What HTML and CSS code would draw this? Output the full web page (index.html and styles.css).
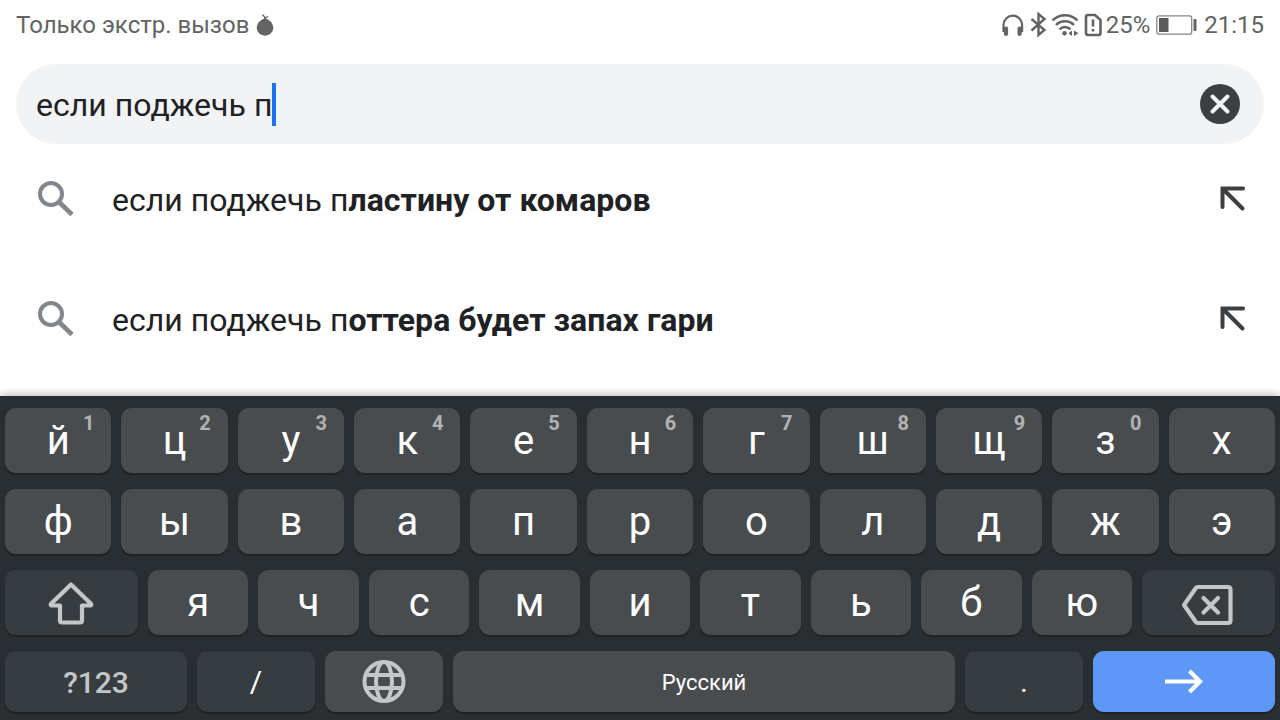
FILE: index.html
```html
<!DOCTYPE html>
<html lang="ru">
<head>
    <meta charset="UTF-8">
    <meta name="viewport" content="width=device-width, initial-scale=1.0">
    <title>Поиск</title>
    <link rel="stylesheet" href="styles.css">
</head>
<body>
    <header class="status">
        <span class="carrier">Только экстр. вызов</span>
        <svg class="fruit" width="18" height="24" viewBox="0 0 18 24">
            <circle cx="9" cy="14.500" r="8.300" fill="#636363"/>
            <path d="M9 8V4.500L6.500 1.500M9 5l3-1.500" fill="none" stroke="#636363" stroke-width="1.300"/>
            <path d="M5 8l4-3.500L13 8z" fill="#636363"/>
        </svg>
        <div class="status-icons">
            <svg width="104" height="26" viewBox="0 0 104 26" fill="none" stroke="#636363" stroke-width="2.200">
                <!-- headphones -->
                <path d="M2.500 20v-7a9.300 9.300 0 0 1 18.600 0v7"/>
                <path d="M5 16.500v5.500M18.600 16.500v5.500" stroke-width="4.200" stroke-linecap="round"/>
                <!-- bluetooth -->
                <path d="M30.500 7l13 11-6 5V2l6 5-13 11.500" stroke-width="2.400"/>
                <!-- wifi -->
                <path d="M51.500 8.500a17.500 17.500 0 0 1 25 0M55 13a12.500 12.500 0 0 1 18 0M58.500 17.300a8 8 0 0 1 11 0" stroke-width="2.500"/>
                <circle cx="63.500" cy="21.300" r="2.200" fill="#636363" stroke="none"/>
                <path d="M71 18.500v5.500l-3.500-2.800zM73 18.500l4.500 2.700-4.500 2.800z" fill="#636363" stroke="none"/>
                <!-- sim card -->
                <path d="M85 5q0-2 2-2h7l5.500 5V21q0 2-2 2H87q-2 0-2-2z" stroke-width="2.600"/>
                <path d="M92 7.500v7M92 17v2.600" stroke-width="2.600"/>
            </svg>
            <span class="percent">25%</span>
            <svg class="battery" width="41" height="20" viewBox="0 0 41 20">
                <rect x=".8" y=".8" width="34.900" height="18.400" rx="2.500" fill="none" stroke="#858585" stroke-width="1.300"/>
                <rect x="3" y="3" width="9.500" height="14" fill="#5c5c5c"/>
                <rect x="37.500" y="4" width="3" height="12" rx="1" fill="#636363"/>
            </svg>
            <span class="time">21:15</span>
        </div>
    </header>

    <div class="search">
        <span class="query">если поджечь п</span>
        <span class="caret"></span>
        <svg class="clear" width="40" height="40" viewBox="0 0 40 40">
            <circle cx="20" cy="20" r="20" fill="#3c4043"/>
            <path d="M12.500 12.500l15 15M27.500 12.500l-15 15" stroke="#f1f3f4" stroke-width="4" stroke-linecap="round"/>
        </svg>
    </div>

    <ul class="suggestions">
        <li>
            <svg class="lens" width="36" height="36" viewBox="0 0 36 36" fill="none" stroke="#80868b">
                <circle cx="13" cy="13" r="11" stroke-width="4"/>
                <path d="M21 21l13 12.500" stroke-width="4.600"/>
            </svg>
            <span>если поджечь п<b>ластину от комаров</b></span>
            <svg class="fill" width="26" height="26" viewBox="0 0 26 26" fill="none" stroke="#3c4043" stroke-width="4" stroke-linecap="round">
                <path d="M23 2.500H2.500V21M3.500 3.500l19 19"/>
            </svg>
        </li>
        <li>
            <svg class="lens" width="36" height="36" viewBox="0 0 36 36" fill="none" stroke="#80868b">
                <circle cx="13" cy="13" r="11" stroke-width="4"/>
                <path d="M21 21l13 12.500" stroke-width="4.600"/>
            </svg>
            <span>если поджечь п<b>оттера будет запах гари</b></span>
            <svg class="fill" width="26" height="26" viewBox="0 0 26 26" fill="none" stroke="#3c4043" stroke-width="4" stroke-linecap="round">
                <path d="M23 2.500H2.500V21M3.500 3.500l19 19"/>
            </svg>
        </li>
    </ul>

    <div class="keyboard">
        <div class="row">
            <div class="key">й<sup>1</sup></div>
            <div class="key">ц<sup>2</sup></div>
            <div class="key">у<sup>3</sup></div>
            <div class="key">к<sup>4</sup></div>
            <div class="key">е<sup>5</sup></div>
            <div class="key">н<sup>6</sup></div>
            <div class="key">г<sup>7</sup></div>
            <div class="key">ш<sup>8</sup></div>
            <div class="key">щ<sup>9</sup></div>
            <div class="key">з<sup>0</sup></div>
            <div class="key">х</div>
        </div>
        <div class="row">
            <div class="key">ф</div>
            <div class="key">ы</div>
            <div class="key">в</div>
            <div class="key">а</div>
            <div class="key">п</div>
            <div class="key">р</div>
            <div class="key">о</div>
            <div class="key">л</div>
            <div class="key">д</div>
            <div class="key">ж</div>
            <div class="key">э</div>
        </div>
        <div class="row">
            <div class="key dark shift">
                <svg width="46" height="44" viewBox="0 0 46 44" fill="none" stroke="#c4c6c8" stroke-width="4.200" stroke-linejoin="round">
                    <path d="M23 3.500L2.800 23q-.5 1.500 1 1.500H12V39.500q0 2 2 2h18q2 0 2-2V24.500h8.200q1.500 0 1-1.500z"/>
                </svg>
            </div>
            <div class="key">я</div>
            <div class="key">ч</div>
            <div class="key">с</div>
            <div class="key">м</div>
            <div class="key">и</div>
            <div class="key">т</div>
            <div class="key">ь</div>
            <div class="key">б</div>
            <div class="key">ю</div>
            <div class="key dark shift backspace">
                <svg width="52" height="42" viewBox="0 0 52 42" fill="none" stroke="#c4c6c8" stroke-width="4.200" stroke-linejoin="round" stroke-linecap="round">
                    <path d="M17 3h30q2.500 0 2.500 2.500v31q0 2.500-2.500 2.500H17q-1.500 0-2.500-1.500L3 21 14.500 4.500Q15.500 3 17 3z"/>
                    <path d="M22.500 14l14.500 14.500M37 14L22.500 28.500"/>
                </svg>
            </div>
        </div>
        <div class="row bottom">
            <div class="key dark symbols">?123</div>
            <div class="key dark small">/</div>
            <div class="key small">
                <svg width="44" height="44" viewBox="0 0 44 44" fill="none" stroke="#c4c6c8" stroke-width="4">
                    <circle cx="22" cy="21.500" r="19.500"/>
                    <ellipse cx="22" cy="21.500" rx="8" ry="19.500"/>
                    <path d="M4 15h36M4 28h36"/>
                </svg>
            </div>
            <div class="key space">Русский</div>
            <div class="key dark small">.</div>
            <div class="key enter">
                <svg width="40" height="26" viewBox="0 0 40 26" fill="none" stroke="#fff" stroke-width="4.200">
                    <path d="M1 12.500h35M25.500 2L36 12.500 25.500 23"/>
                </svg>
            </div>
        </div>
    </div>
</body>
</html>
```
FILE: styles.css
```css
* {
    box-sizing: border-box;
}
body {
    margin: 0;
    width: 1280px;
    height: 720px;
    overflow: hidden;
    display: flex;
    flex-direction: column;
    background: #fff;
    font-family: Roboto, sans-serif;
    color: #202124;
}
.status {
    height: 64px;
    padding: 0 16px 14px;
    display: flex;
    align-items: center;
    font-size: 24px;
    color: #636363;
}
.fruit {
    margin-left: 7px;
}
.status-icons {
    margin-left: auto;
    display: flex;
    align-items: center;
}
.percent {
    margin-left: 1px;
}
.battery {
    margin: 0 7px 0 6px;
}
.search {
    height: 80px;
    margin: 0 16px;
    padding: 0 24px 0 20px;
    display: flex;
    align-items: center;
    border-radius: 40px;
    background: #f1f3f4;
    font-size: 32px;
}
.query {
    padding-top: 2px;
    letter-spacing: 0.04px;
}
.caret {
    width: 4px;
    height: 43px;
    background: #1a73e8;
}
.clear {
    margin-left: auto;
}
.suggestions {
    flex: 1;
    margin: 0;
    padding: 0;
    list-style: none;
    font-size: 32px;
}
.suggestions li {
    height: 120px;
    padding: 0 34px 8px 38px;
    display: flex;
    align-items: center;
}
.suggestions li span {
    margin: 0 auto 0 38px;
    letter-spacing: 0.04px;
}
.lens {
    margin-top: -3px;
}
.fill {
    margin-top: -2px;
}
.keyboard {
    position: relative;
    height: 324px;
    padding: 12px 5px 8px;
    display: flex;
    flex-direction: column;
    gap: 16px;
    background: #292e32;
    box-shadow: 0 -1px 8px rgba(0, 0, 0, 0.3);
}
.row {
    height: 65px;
    display: flex;
    gap: 10px;
}
.key {
    position: relative;
    flex: 1;
    display: flex;
    align-items: center;
    justify-content: center;
    padding-bottom: 1px;
    border-radius: 11px;
    background: #494c4f;
    box-shadow: 0 2px 1px #1f2326;
    font-size: 40px;
    color: #fff;
}
.key sup {
    position: absolute;
    top: 4px;
    right: 17px;
    font-size: 20px;
    line-height: 23px;
    font-weight: 700;
    color: #b0b2b4;
}
.dark {
    background: #373c40;
}
.shift {
    flex: 0 0 133px;
    padding: 0 1px 0 0;
}
.backspace {
    padding: 4px 2px 0 0;
}
.bottom {
    height: 61px;
}
.bottom .key {
    padding-bottom: 0;
}
.bottom .symbols {
    flex: 0 0 182px;
    padding-top: 2px;
    font-size: 30px;
    font-weight: 500;
    color: #c4c6c8;
}
.bottom .small {
    flex: 0 0 118px;
    font-size: 30px;
}
.bottom .space {
    padding-top: 2px;
    font-size: 22px;
}
.bottom .enter {
    flex: 0 0 182px;
    background: #5e97f6;
}
```
